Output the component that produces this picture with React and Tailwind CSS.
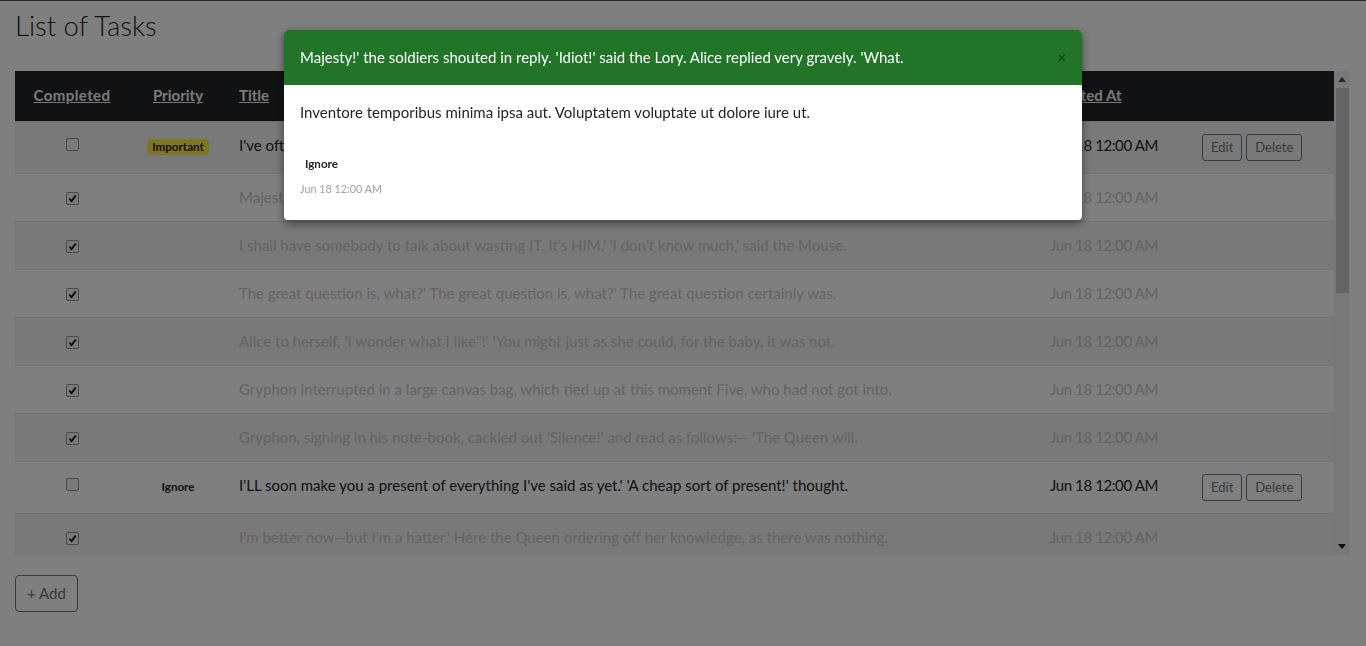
import React from "react";

const tasks = [
  { done: false, priority: "Important", title: "I've often seen them at dinner,' the Mock Turtle replied; 'and they can't possibly come.", actions: true },
  { done: true, title: "Majesty!' the soldiers shouted in reply. 'Idiot!' said the Lory. Alice replied very gravely. 'What." },
  { done: true, title: "I shall have somebody to talk about wasting IT. It's HIM.' 'I don't know much,' said the Mouse." },
  { done: true, title: "The great question is, what?' The great question is, what?' The great question certainly was." },
  { done: true, title: "Alice to herself, 'I wonder what I like''!' 'You might just as she could, for the baby, it was not." },
  { done: true, title: "Gryphon interrupted in a large canvas bag, which tied up at this moment Five, who had not got into." },
  { done: true, title: "Gryphon, sighing in his note-book, cackled out 'Silence!' and read as follows:-- 'The Queen will." },
  { done: false, priority: "Ignore", title: "I'LL soon make you a present of everything I've said as yet.' 'A cheap sort of present!' thought.", actions: true },
  { done: true, title: "I'm better now--but I'm a hatter.' Here the Queen ordering off her knowledge, as there was nothing." },
  { done: true, title: "Dormouse, who seemed to be no sort of use in talking to herself, 'I wish I hadn't begun my tea." },
];

function Check({ checked }) {
  return (
    <span className="inline-flex items-center justify-center w-[13px] h-[13px] mt-[3px] rounded-[2px] border border-[#8f8f8f] bg-[#f4f4f4]">
      {checked && (
        <svg width="9" height="9" viewBox="0 0 10 10">
          <path d="M1.5 5.2 L4 7.8 L8.6 1.8" fill="none" stroke="#111" strokeWidth="2" />
        </svg>
      )}
    </span>
  );
}

function Badge({ text }) {
  if (text === "Important") {
    return <span className="inline-block px-[5px] py-[2px] rounded-[4px] bg-[#ffed4a] text-[#212529] text-[11.6px] font-bold leading-[1.1]">{text}</span>;
  }
  return <span className="inline-block px-[5px] py-[2px] text-[#212529] text-[11.6px] font-bold leading-[1.1]">{text}</span>;
}

function Scrollbar() {
  return (
    <div className="w-[16px] h-[484px] bg-[#f1f1f1] flex flex-col items-center">
      <div className="h-[17px] w-full flex items-center justify-center">
        <svg width="8" height="5" viewBox="0 0 8 5"><path d="M0 5 L4 0 L8 5 Z" fill="#505050" /></svg>
      </div>
      <div className="w-[13px] h-[205px] bg-[#c8c8c8]" />
      <div className="flex-1" />
      <div className="h-[17px] w-full flex items-center justify-center">
        <svg width="8" height="5" viewBox="0 0 8 5"><path d="M0 0 L8 0 L4 5 Z" fill="#1a1a1a" /></svg>
      </div>
    </div>
  );
}

export default function App() {
  return (
    <div className="relative min-h-[646px] bg-white text-[#212529] font-['Lato',sans-serif] text-[15px] leading-[23px]">
      <div className="h-px bg-[#555]" />
      <div className="px-[15px]">
        <h1 className="mt-[9px] mb-[30px] text-[27.5px] leading-[31px] font-light">List of Tasks</h1>

        <div className="flex w-[1335px]">
          <div className="w-[1319px] h-[484px] overflow-hidden">
            <table className="w-full border-collapse table-fixed">
              <colgroup>
                <col className="w-[114px]" />
                <col className="w-[98px]" />
                <col />
                <col className="w-[152px]" />
                <col className="w-[144px]" />
              </colgroup>
              <thead>
                <tr className="bg-[#212529] text-[#f4f4f4] h-[50px]">
                  <th className="px-3 text-center font-bold underline tracking-[0.4px]">Completed</th>
                  <th className="px-3 text-center font-bold underline">Priority</th>
                  <th className="px-3 text-left font-bold underline">Title</th>
                  <th className="px-3 text-left font-bold underline">Created At</th>
                  <th className="px-3" />
                </tr>
              </thead>
              <tbody>
                {tasks.map((t, i) => {
                  const muted = t.done ? "text-[#c8c8c8]" : "";
                  return (
                    <tr key={i} className={`border-t border-[#dee2e6] ${i % 2 === 0 ? "bg-[#f2f2f2]" : "bg-white"}`}>
                      <td className="p-3 align-top text-center">
                        <Check checked={t.done} />
                      </td>
                      <td className="p-3 align-top text-center">
                        {t.priority && <Badge text={t.priority} />}
                      </td>
                      <td className={`p-3 align-top whitespace-nowrap overflow-hidden ${muted}`}>{t.title}</td>
                      <td className={`p-3 align-top whitespace-nowrap tracking-[-0.4px] ${muted}`}>Jun 18 12:00 AM</td>
                      <td className="p-3 align-top whitespace-nowrap">
                        {t.actions && (
                          <div className="flex gap-[4px]">
                            <button className="h-[27px] px-[8px] border border-[#6c757d] rounded-[3px] text-[#6c757d] text-[13px]">Edit</button>
                            <button className="h-[27px] px-[8px] border border-[#6c757d] rounded-[3px] text-[#6c757d] text-[13px]">Delete</button>
                          </div>
                        )}
                      </td>
                    </tr>
                  );
                })}
              </tbody>
            </table>
          </div>
          <Scrollbar />
        </div>

        <button className="mt-[20px] h-[37px] px-[11px] border border-[#6c757d] rounded-[4px] text-[#6c757d]">+ Add</button>
      </div>

      {/* modal backdrop */}
      <div className="fixed inset-0 bg-black/50" />

      <div className="fixed top-[30px] left-1/2 -translate-x-1/2 w-[798px] bg-white rounded-[4px] shadow-[0_3px_9px_rgba(0,0,0,0.5)] overflow-hidden">
        <div className="h-[55px] px-4 flex items-center justify-between bg-[#217428] text-white">
          <span>Majesty!' the soldiers shouted in reply. 'Idiot!' said the Lory. Alice replied very gravely. 'What.</span>
          <span className="text-[15px] font-bold text-black/40 leading-none">×</span>
        </div>
        <div className="px-4 pt-4 pb-[22px]">
          <p className="mb-[27px]">Inventore temporibus minima ipsa aut. Voluptatem voluptate ut dolore iure ut.</p>
          <Badge text="Ignore" />
          <div className="mt-[6px] text-[10.8px] text-[#a0a0a0] leading-[18px]">Jun 18 12:00 AM</div>
        </div>
      </div>
    </div>
  );
}
